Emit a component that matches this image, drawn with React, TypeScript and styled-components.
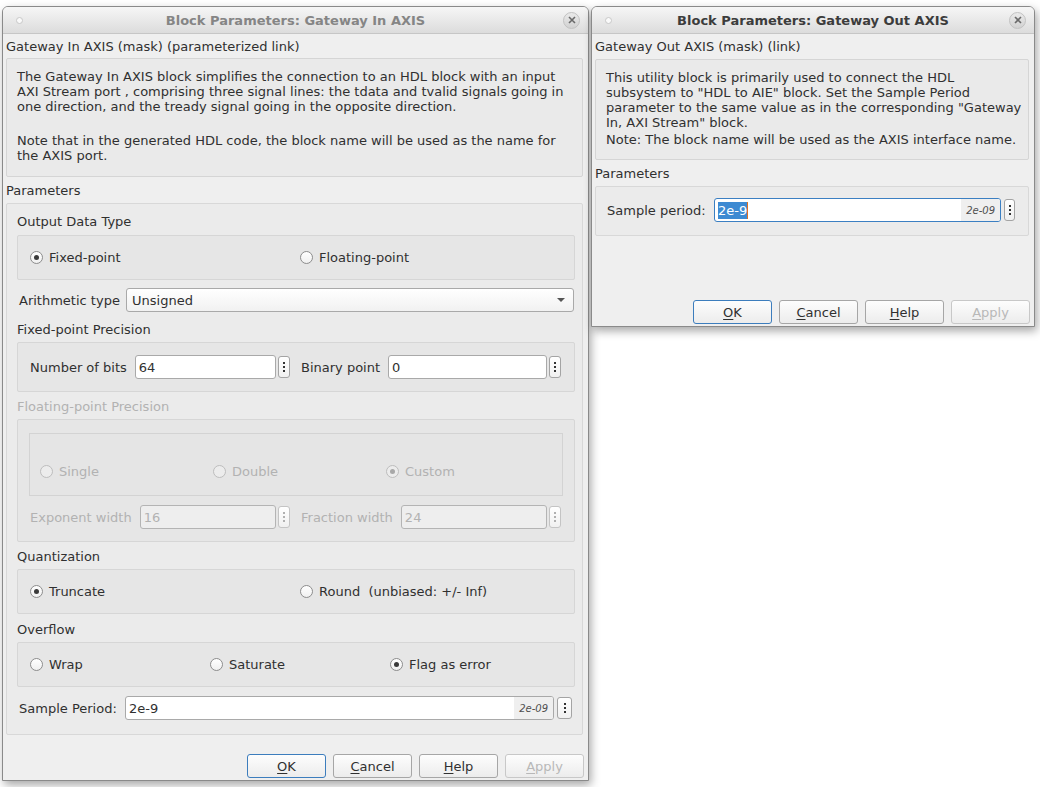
import React from "react";
import styled, { createGlobalStyle, css } from "styled-components";

const Global = createGlobalStyle`
  html, body { margin: 0; padding: 0; background: #ffffff; }
  body { font-family: "DejaVu Sans", "Liberation Sans", sans-serif; font-size: 13px; color: #303030; }
  * { box-sizing: border-box; }
`;

const Desktop = styled.div`
  position: relative;
  width: 1040px;
  height: 787px;
  background: #ffffff;
  overflow: hidden;
`;

const Win = styled.div<{ $x: number; $y: number; $w: number; $h: number }>`
  position: absolute;
  left: ${(p) => p.$x}px;
  top: ${(p) => p.$y}px;
  width: ${(p) => p.$w}px;
  height: ${(p) => p.$h}px;
  display: flex;
  flex-direction: column;
  background: #efefef;
  border: 1px solid #8a8a8a;
  border-radius: 6px 6px 0 0;
  box-shadow: 2px 4px 10px rgba(0, 0, 0, 0.35);
`;

const TitleBar = styled.div`
  height: 27px;
  flex: none;
  display: grid;
  grid-template-columns: 40px 1fr 40px;
  align-items: center;
  background: linear-gradient(#f6f6f6, #dcdcdc);
  border-bottom: 1px solid #c6c6c6;
  border-radius: 5px 5px 0 0;
`;

const Title = styled.div<{ $active?: boolean }>`
  text-align: center;
  font-weight: bold;
  font-size: 13px;
  color: ${(p) => (p.$active ? "#3c3c3c" : "#858585")};
  white-space: nowrap;
`;

const MenuDot = styled.div`
  width: 7px;
  height: 7px;
  border-radius: 50%;
  background: #fafafa;
  border: 1px solid #c8c8c8;
  margin-left: 13px;
`;

const CloseBtn = styled.div`
  justify-self: end;
  margin-right: 8px;
  width: 17px;
  height: 17px;
  border-radius: 50%;
  background: linear-gradient(#eaeaea, #d2d2d2);
  border: 1px solid #c2c2c2;
  display: flex;
  align-items: center;
  justify-content: center;
`;

const Content = styled.div`
  flex: 1;
  display: flex;
  flex-direction: column;
  padding: 5px 5px 2px 3px;
`;

const Caption = styled.div<{ $mt?: number }>`
  height: 16px;
  line-height: 16px;
  white-space: nowrap;
  margin-top: ${(p) => p.$mt ?? 0}px;
`;

const Desc = styled.div<{ $h: number; $mt: number }>`
  height: ${(p) => p.$h}px;
  margin-top: ${(p) => p.$mt}px;
  background: #eaeaea;
  border: 1px solid #d5d5d5;
  border-radius: 2px;
  padding: 10px 10px;
  line-height: 15px;
  white-space: nowrap;
`;

const Para = styled.p<{ $mt?: number }>`
  margin: ${(p) => p.$mt ?? 0}px 0 0 0;
`;

const Group = styled.div<{ $mt: number; $h?: number; $pad?: string }>`
  margin-top: ${(p) => p.$mt}px;
  ${(p) => p.$h !== undefined && css`height: ${p.$h}px;`}
  background: #ebebeb;
  border: 1px solid #d8d8d8;
  border-radius: 2px;
  padding: ${(p) => p.$pad ?? "10px 7px 0 10px"};
  display: flex;
  flex-direction: column;
`;

const SubLabel = styled.div<{ $mt?: number; $disabled?: boolean }>`
  height: 16px;
  line-height: 16px;
  margin-top: ${(p) => p.$mt ?? 0}px;
  color: ${(p) => (p.$disabled ? "#b2b2b2" : "inherit")};
  white-space: nowrap;
`;

const Box = styled.div<{ $mt?: number; $h: number }>`
  margin-top: ${(p) => p.$mt ?? 4}px;
  height: ${(p) => p.$h}px;
  background: #e6e6e6;
  border: 1px solid #d6d6d6;
  border-radius: 2px;
  display: flex;
  flex-direction: column;
`;

const InnerBox = styled.div`
  margin: 13px 11px 9px 11px;
  height: 63px;
  flex: none;
  border: 1px solid #d3d3d3;
  background: #e5e5e5;
  display: flex;
  flex-direction: column;
`;

const RadioRow = styled.div<{ $col: number; $pl: number; $pt?: number }>`
  flex: 1;
  display: grid;
  grid-template-columns: repeat(auto-fill, ${(p) => p.$col}px);
  align-items: center;
  padding-left: ${(p) => p.$pl}px;
  padding-top: ${(p) => p.$pt ?? 0}px;
`;

const RadioItem = styled.label<{ $disabled?: boolean }>`
  display: flex;
  align-items: center;
  gap: 6px;
  white-space: pre;
  color: ${(p) => (p.$disabled ? "#b2b2b2" : "inherit")};
`;

const RadioCircle = styled.span<{ $checked?: boolean; $disabled?: boolean }>`
  width: 13px;
  height: 13px;
  border-radius: 50%;
  border: 1px solid ${(p) => (p.$disabled ? "#bdbdbd" : "#8d8d8d")};
  background: ${(p) => (p.$disabled ? "#ececec" : "linear-gradient(#ffffff, #f0f0f0)")};
  display: flex;
  align-items: center;
  justify-content: center;
  &::after {
    content: "";
    display: ${(p) => (p.$checked ? "block" : "none")};
    width: 5px;
    height: 5px;
    border-radius: 50%;
    background: ${(p) => (p.$disabled ? "#a8a8a8" : "#3a3a3a")};
  }
`;

const FieldRow = styled.div<{ $pl: number; $pr: number; $mt?: number; $fixed?: boolean }>`
  display: flex;
  align-items: center;
  gap: 11px;
  padding: 0 ${(p) => p.$pr}px 0 ${(p) => p.$pl}px;
  margin-top: ${(p) => p.$mt ?? 0}px;
  ${(p) => (p.$fixed ? css`flex: none; height: 24px;` : css`flex: 1;`)}
`;

const Half = styled.div`
  flex: 1;
  display: flex;
  align-items: center;
`;

const FieldLabel = styled.span<{ $disabled?: boolean; $w?: number }>`
  white-space: nowrap;
  margin-right: 8px;
  ${(p) => p.$w !== undefined && css`width: ${p.$w}px; margin-right: 0;`}
  color: ${(p) => (p.$disabled ? "#b2b2b2" : "inherit")};
`;

const Input = styled.div<{ $disabled?: boolean; $focus?: boolean }>`
  flex: 1;
  height: 24px;
  display: flex;
  align-items: center;
  background: ${(p) => (p.$disabled ? "#eeeeee" : "#ffffff")};
  border: 1px solid ${(p) => (p.$focus ? "#3b7fc2" : p.$disabled ? "#b4b4b4" : "#a9a9a9")};
  border-radius: 3px;
  color: ${(p) => (p.$disabled ? "#b2b2b2" : "inherit")};
  overflow: hidden;
`;

const InputText = styled.span`
  flex: 1;
  padding-left: 3px;
  white-space: nowrap;
`;

const Selected = styled.span`
  background: #3d8ad2;
  color: #ffffff;
  padding: 1px 0;
  border-right: 1px solid #e07020;
`;

const Hint = styled.span`
  height: 100%;
  display: flex;
  align-items: center;
  padding: 0 5px;
  background: #efefef;
  font-size: 10px;
  font-style: italic;
  color: #505050;
`;

const DotsBtn = styled.div<{ $disabled?: boolean; $w?: number; $ml?: number }>`
  flex: none;
  width: ${(p) => p.$w ?? 12}px;
  height: 22px;
  margin-left: ${(p) => p.$ml ?? 2}px;
  border: 1px solid ${(p) => (p.$disabled ? "#c4c4c4" : "#a4a4a4")};
  border-radius: 3px;
  background: linear-gradient(#ffffff, #f0f0f0);
  display: flex;
  flex-direction: column;
  align-items: center;
  justify-content: center;
  gap: 2px;
  & > i {
    width: 2px;
    height: 2px;
    background: ${(p) => (p.$disabled ? "#b0b0b0" : "#333")};
  }
`;

const Select = styled.div`
  flex: 1;
  height: 24px;
  display: flex;
  align-items: center;
  justify-content: space-between;
  padding: 0 8px 0 5px;
  border: 1px solid #a9a9a9;
  border-radius: 3px;
  background: linear-gradient(#ffffff, #f1f1f1);
`;

const Arrow = styled.span`
  width: 0;
  height: 0;
  border-left: 4px solid transparent;
  border-right: 4px solid transparent;
  border-top: 4px solid #555;
`;

const ButtonBar = styled.div`
  display: flex;
  justify-content: flex-end;
  gap: 7px;
  margin-top: auto;
  margin-right: -1px;
`;

const Btn = styled.div<{ $default?: boolean; $disabled?: boolean }>`
  width: 79px;
  height: 24px;
  display: flex;
  align-items: center;
  justify-content: center;
  border: 1px solid ${(p) => (p.$default ? "#3c7dbd" : p.$disabled ? "#c8c8c8" : "#a6a6a6")};
  border-radius: 3px;
  background: linear-gradient(#fdfdfd, #ececec);
  color: ${(p) => (p.$disabled ? "#b8b8b8" : "#303030")};
  & u { text-decoration-thickness: 1px; text-underline-offset: 2px; }
`;

const Dots = ({ disabled, w, ml }: { disabled?: boolean; w?: number; ml?: number }) => (
  <DotsBtn $disabled={disabled} $w={w} $ml={ml}>
    <i />
    <i />
    <i />
  </DotsBtn>
);

const Radio = ({ label, checked, disabled }: { label: string; checked?: boolean; disabled?: boolean }) => (
  <RadioItem $disabled={disabled}>
    <RadioCircle $checked={checked} $disabled={disabled} />
    <span>{label}</span>
  </RadioItem>
);

const Close = () => (
  <CloseBtn>
    <svg width="8" height="8" viewBox="0 0 8 8">
      <path d="M1 1 L7 7 M7 1 L1 7" stroke="#6a6a6a" strokeWidth="1.6" />
    </svg>
  </CloseBtn>
);

const Buttons = () => (
  <ButtonBar>
    <Btn $default>
      <span><u>O</u>K</span>
    </Btn>
    <Btn>
      <span><u>C</u>ancel</span>
    </Btn>
    <Btn>
      <span><u>H</u>elp</span>
    </Btn>
    <Btn $disabled>
      <span><u>A</u>pply</span>
    </Btn>
  </ButtonBar>
);

export default function App() {
  return (
    <Desktop>
      <Global />
      <Win $x={2} $y={6} $w={587} $h={775}>
        <TitleBar>
          <MenuDot />
          <Title>Block Parameters: Gateway In AXIS</Title>
          <Close />
        </TitleBar>
        <Content>
          <Caption>Gateway In AXIS (mask) (parameterized link)</Caption>
          <Desc $h={119} $mt={3}>
            <Para>
              The Gateway In AXIS block simplifies the connection to an HDL block with an input
              <br />
              AXI Stream port , comprising three signal lines: the tdata and tvalid signals going in
              <br />
              one direction, and the tready signal going in the opposite direction.
            </Para>
            <Para $mt={19}>
              Note that in the generated HDL code, the block name will be used as the name for
              <br />
              the AXIS port.
            </Para>
          </Desc>
          <Caption $mt={6}>Parameters</Caption>
          <Group $mt={4} $h={532}>
            <SubLabel>Output Data Type</SubLabel>
            <Box $h={45} $mt={5}>
              <RadioRow $col={270} $pl={12}>
                <Radio label="Fixed-point" checked />
                <Radio label="Floating-point" />
              </RadioRow>
            </Box>
            <FieldRow $pl={2} $pr={1} $mt={8} $fixed>
              <Half>
                <FieldLabel $w={107}>Arithmetic type</FieldLabel>
                <Select>
                  <span>Unsigned</span>
                  <Arrow />
                </Select>
              </Half>
            </FieldRow>
            <SubLabel $mt={10}>Fixed-point Precision</SubLabel>
            <Box $h={50}>
              <FieldRow $pl={12} $pr={13}>
                <Half>
                  <FieldLabel>Number of bits</FieldLabel>
                  <Input>
                    <InputText>64</InputText>
                  </Input>
                  <Dots />
                </Half>
                <Half>
                  <FieldLabel>Binary point</FieldLabel>
                  <Input>
                    <InputText>0</InputText>
                  </Input>
                  <Dots />
                </Half>
              </FieldRow>
            </Box>
            <SubLabel $mt={7} $disabled>Floating-point Precision</SubLabel>
            <Box $h={123}>
              <InnerBox>
                <RadioRow $col={173} $pl={10} $pt={14}>
                  <Radio label="Single" disabled />
                  <Radio label="Double" disabled />
                  <Radio label="Custom" checked disabled />
                </RadioRow>
              </InnerBox>
              <FieldRow $pl={12} $pr={13} $fixed>
                <Half>
                  <FieldLabel $disabled>Exponent width</FieldLabel>
                  <Input $disabled>
                    <InputText>16</InputText>
                  </Input>
                  <Dots disabled />
                </Half>
                <Half>
                  <FieldLabel $disabled>Fraction width</FieldLabel>
                  <Input $disabled>
                    <InputText>24</InputText>
                  </Input>
                  <Dots disabled />
                </Half>
              </FieldRow>
            </Box>
            <SubLabel $mt={7}>Quantization</SubLabel>
            <Box $h={45}>
              <RadioRow $col={270} $pl={12}>
                <Radio label="Truncate" checked />
                <Radio label="Round  (unbiased: +/- Inf)" />
              </RadioRow>
            </Box>
            <SubLabel $mt={8}>Overflow</SubLabel>
            <Box $h={45}>
              <RadioRow $col={180} $pl={12}>
                <Radio label="Wrap" />
                <Radio label="Saturate" />
                <Radio label="Flag as error" checked />
              </RadioRow>
            </Box>
            <FieldRow $pl={2} $pr={3} $mt={9} $fixed>
              <Half>
                <FieldLabel $w={106}>Sample Period:</FieldLabel>
                <Input>
                  <InputText>2e-9</InputText>
                  <Hint>2e-09</Hint>
                </Input>
                <Dots w={15} ml={3} />
              </Half>
            </FieldRow>
          </Group>
          <Buttons />
        </Content>
      </Win>

      <Win $x={591} $y={6} $w={444} $h={321}>
        <TitleBar>
          <MenuDot />
          <Title $active>Block Parameters: Gateway Out AXIS</Title>
          <Close />
        </TitleBar>
        <Content>
          <Caption>Gateway Out AXIS (mask) (link)</Caption>
          <Desc $h={101} $mt={4}>
            <Para>
              This utility block is primarily used to connect the HDL
              <br />
              subsystem to "HDL to AIE" block. Set the Sample Period
              <br />
              parameter to the same value as in the corresponding "Gateway
              <br />
              In, AXI Stream" block.
            </Para>
            <Para $mt={2}>Note: The block name will be used as the AXIS interface name.</Para>
          </Desc>
          <Caption $mt={6}>Parameters</Caption>
          <Group $mt={4} $h={50} $pad="0 13px 2px 11px">
            <FieldRow $pl={0} $pr={0}>
              <Half>
                <FieldLabel $w={107}>Sample period:</FieldLabel>
                <Input $focus>
                  <InputText>
                    <Selected>2e-9</Selected>
                  </InputText>
                  <Hint>2e-09</Hint>
                </Input>
                <Dots w={11} ml={3} />
              </Half>
            </FieldRow>
          </Group>
          <Buttons />
        </Content>
      </Win>
    </Desktop>
  );
}
